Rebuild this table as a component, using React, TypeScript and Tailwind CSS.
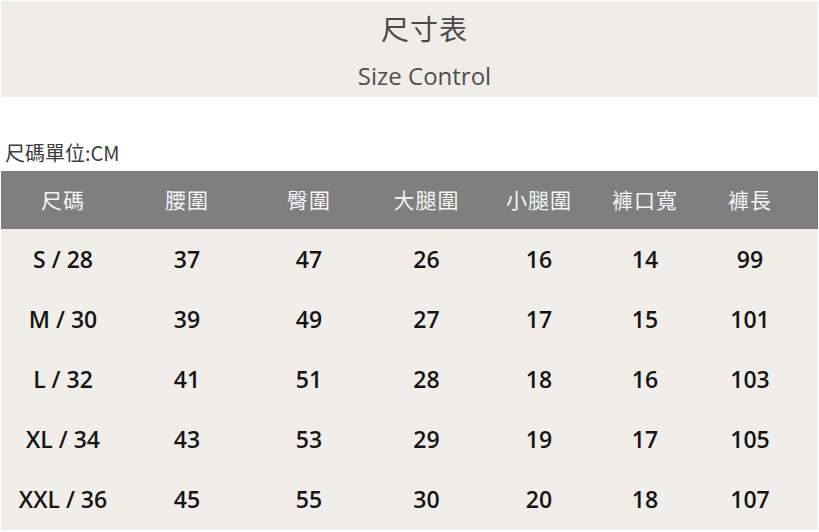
import React from "react";

const headers = ["尺碼", "腰圍", "臀圍", "大腿圍", "小腿圍", "褲口寬", "褲長"];
const rows = [
  ["S / 28", "37", "47", "26", "16", "14", "99"],
  ["M / 30", "39", "49", "27", "17", "15", "101"],
  ["L / 32", "41", "51", "28", "18", "16", "103"],
  ["XL / 34", "43", "53", "29", "19", "17", "105"],
  ["XXL / 36", "45", "55", "30", "20", "18", "107"],
];

const cjk = { fontFamily: '"Noto Sans CJK TC", "Noto Sans", sans-serif' };
const latin = { fontFamily: '"Open Sans", "Noto Sans", sans-serif' };

export default function App() {
  return (
    <div className="w-[819px] h-[532px] bg-white overflow-hidden">
      <div className="mx-[1px] mt-[1px] h-[96px] bg-[#f0ede8] flex flex-col items-center pl-[30px]">
        <div className="mt-[8px] text-[28px] leading-[38px] text-[#4a4a4a] tracking-[1px]" style={cjk}>
          尺寸表
        </div>
        <div className="mt-[13px] text-[24px] leading-[32px] text-[#4f4f4f]" style={latin}>
          Size Control
        </div>
      </div>
      <div className="mt-[42px] ml-[5px] text-[20px] leading-[28px] text-[#3c3c3c]" style={cjk}>
        尺碼單位:CM
      </div>
      <div className="mt-[4px] mx-[1px]">
        <div className="grid grid-cols-[124px_124px_120px_115px_110px_102px_108px_1fr] h-[58px] bg-[#7f7f7f] items-center">
          {headers.map((h) => (
            <div key={h} className="text-center text-[21px] text-[#f4f4f4] tracking-[1px]" style={cjk}>
              {h}
            </div>
          ))}
          <div />
        </div>
        <div className="bg-[#f1eeea] pb-[1px]">
          {rows.map((r, i) => (
            <div key={i} className="grid grid-cols-[124px_124px_120px_115px_110px_102px_108px_1fr] h-[60px] items-center">
              {r.map((c, j) => (
                <div key={j} className="text-center text-[23px] font-semibold text-[#151515]" style={latin}>
                  {c}
                </div>
              ))}
              <div />
            </div>
          ))}
        </div>
      </div>
    </div>
  );
}
